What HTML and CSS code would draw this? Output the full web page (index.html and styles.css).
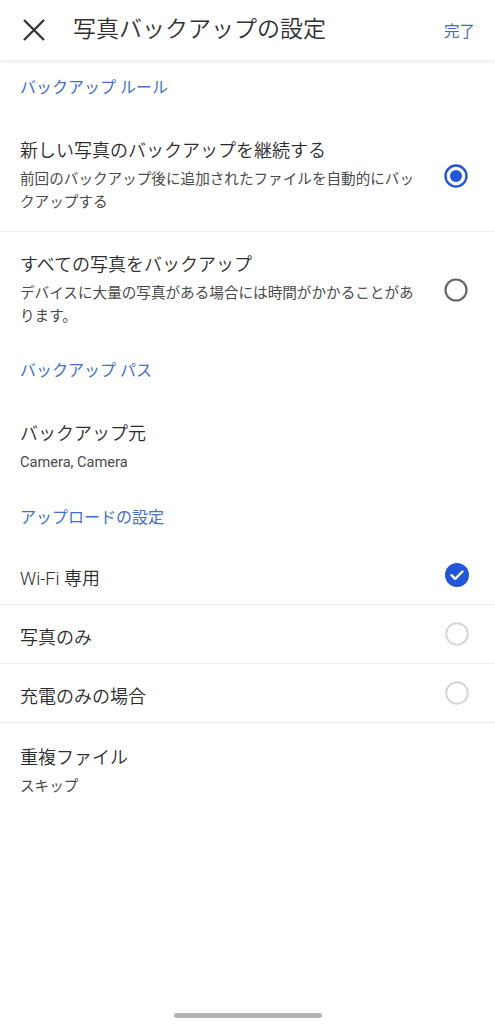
FILE: index.html
```
<!DOCTYPE html>
<html lang="ja">
<head>
<meta charset="utf-8">
<title>写真バックアップの設定</title>
<link rel="stylesheet" href="styles.css">
</head>
<body>
<div class="screen">

<header class="topbar">
  <svg class="close" width="24" height="24" viewBox="0 0 24 24">
    <path d="M2 2 L22 22 M22 2 L2 22" stroke="#333" stroke-width="2.3" fill="none"/>
  </svg>
  <h1 class="title">写真バックアップの設定</h1>
  <span class="done">完了</span>
</header>

<div class="category">バックアップ ルール</div>

<div class="pref divided first">
  <div class="pref-text">
    <div class="pref-title">新しい写真のバックアップを継続する</div>
    <div class="pref-summary">前回のバックアップ後に追加されたファイルを自動的にバックアップする</div>
  </div>
  <svg class="widget" width="26" height="26" viewBox="0 0 26 26">
    <circle cx="13" cy="13" r="10.5" stroke="#2256d6" stroke-width="2.4" fill="none"/>
    <circle cx="13" cy="13" r="6" fill="#2256d6"/>
  </svg>
</div>

<div class="pref second">
  <div class="pref-text">
    <div class="pref-title">すべての写真をバックアップ</div>
    <div class="pref-summary">デバイスに大量の写真がある場合には時間がかかることがあります。</div>
  </div>
  <svg class="widget" width="26" height="26" viewBox="0 0 26 26">
    <circle cx="13" cy="13" r="10.5" stroke="#666" stroke-width="2.2" fill="none"/>
  </svg>
</div>

<div class="category">バックアップ パス</div>

<div class="pref source">
  <div class="pref-text">
    <div class="pref-title">バックアップ元</div>
    <div class="pref-summary">Camera, Camera</div>
  </div>
</div>

<div class="category">アップロードの設定</div>

<div class="row divided">
  <span class="row-title">Wi-Fi 専用</span>
  <svg class="widget" width="26" height="26" viewBox="0 0 26 26">
    <circle cx="13" cy="13" r="12" fill="#2256d6"/>
    <path d="M7.5 13.2 L11.2 16.8 L18.5 9.5" stroke="#fff" stroke-width="2.4" fill="none" stroke-linecap="round" stroke-linejoin="round"/>
  </svg>
</div>

<div class="row divided">
  <span class="row-title">写真のみ</span>
  <svg class="widget" width="26" height="26" viewBox="0 0 26 26">
    <circle cx="13" cy="13" r="10.8" stroke="#d6d6d6" stroke-width="2" fill="none"/>
  </svg>
</div>

<div class="row divided">
  <span class="row-title">充電のみの場合</span>
  <svg class="widget" width="26" height="26" viewBox="0 0 26 26">
    <circle cx="13" cy="13" r="10.8" stroke="#d6d6d6" stroke-width="2" fill="none"/>
  </svg>
</div>

<div class="pref">
  <div class="pref-text">
    <div class="pref-title">重複ファイル</div>
    <div class="pref-summary">スキップ</div>
  </div>
</div>

<div class="spacer"></div>
<div class="home-bar"></div>

</div>
</body>
</html>
```

FILE: styles.css
```
html, body {
   margin: 0;
   padding: 0;
   background-color: white;
}

body {
   font-family: Roboto, "Noto Sans CJK JP", "Noto Sans", sans-serif;
   font-weight: 400;
   color: #333;
}

.screen {
   display: flex;
   flex-direction: column;
   height: 1024px;
}

.topbar {
   display: flex;
   align-items: center;
   height: 60px;
   padding: 0 20px 0 22px;
   box-shadow: 0 2px 3px rgba(0, 0, 0, 0.08);
   position: relative;
}

.close {
   flex: none;
}

.title {
   flex: 1;
   margin: 0 0 0 27px;
   font-size: 23px;
   font-weight: 350;
   color: #303030;
   line-height: 30px;
}

.done {
   font-size: 15.5px;
   color: #3f6bc6;
}

.category {
   padding: 16px 20px;
   font-size: 16px;
   line-height: 24px;
   color: #4270c9;
}

.pref {
   display: flex;
   align-items: center;
   padding: 22px 26px 15px 20px;
}

.pref.first {
   padding-bottom: 17px;
}

.pref.second {
   padding-top: 20px;
}

.pref.source {
   padding-bottom: 16px;
}

.divided {
   border-bottom: 1px solid #f0f0f0;
}

.pref-text {
   flex: 1;
}

.pref-title {
   font-size: 18px;
   font-weight: 350;
   line-height: 25px;
   color: #2b2b2b;
}

.pref-summary {
   width: 400px;
   margin-top: 5px;
   font-size: 14.6px;
   line-height: 23px;
   color: #4a4a4a;
}

.widget {
   flex: none;
   margin-left: 10px;
}

.row {
   display: flex;
   align-items: center;
   height: 59px;
   padding: 0 25px 0 20px;
   box-sizing: border-box;
}

.row-title {
   flex: 1;
   font-size: 18px;
   font-weight: 350;
   line-height: 25px;
   padding-top: 6px;
   color: #2b2b2b;
}

.spacer {
   flex: 1;
}

.home-bar {
   align-self: center;
   width: 148px;
   height: 5px;
   margin-bottom: 6px;
   border-radius: 3px;
   background-color: #b3b3b3;
}
```
